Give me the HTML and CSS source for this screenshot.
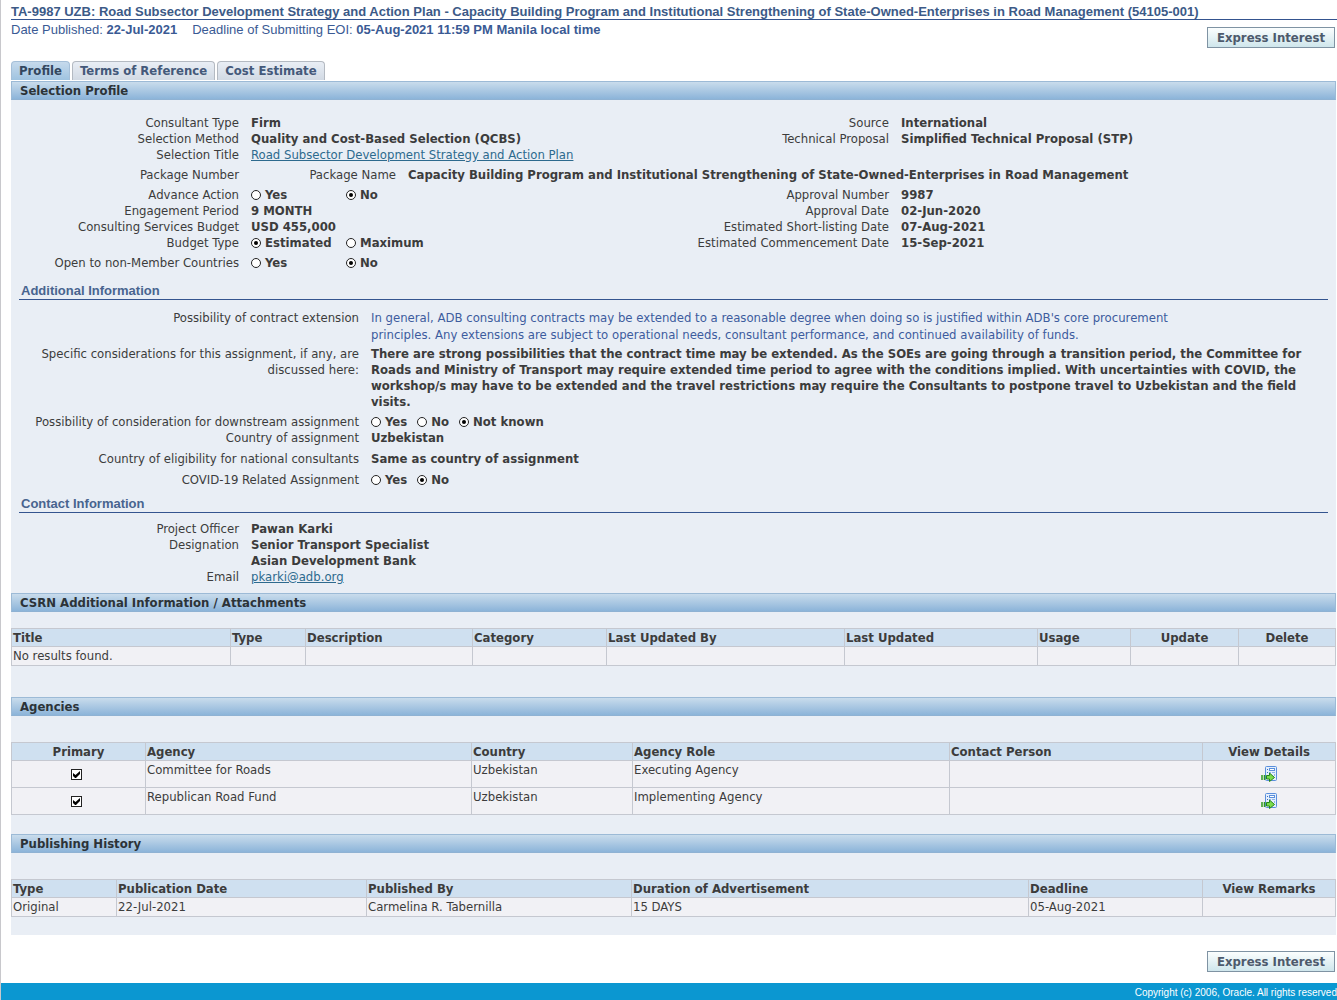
FILE: index.html
```html
<!DOCTYPE html>
<html lang="en">
<head>
    <meta charset="UTF-8">
    <meta name="viewport" content="width=device-width, initial-scale=1.0">
    <title>Selection Profile</title>
    <link rel="stylesheet" href="styles.css">
</head>
<body>
    <svg class="sprite" aria-hidden="true">
        <symbol id="details" viewBox="0 0 16 16">
            <rect x="4.5" y=".5" width="11" height="14" rx="1" fill="#e4effc" stroke="#5b8fdc"/>
            <path d="M6 3.5h1M6 6.5h1" stroke="#3c6cc0"/>
            <rect x="8.5" y="2.5" width="5" height="2" fill="#fff" stroke="#5b8fdc"/>
            <path d="M8 6.5h2M11 6.5h3M13.5 8v2" stroke="#8fb4ea"/>
            <path d="M1 9v5M3.5 9v5" stroke="#2f9a1c" stroke-width="1.5"/>
            <path d="M5.5 9.5h3V7l5 4.5-5 4v-2.500h-3z" fill="#7ddc4c" stroke="#24851a"/>
        </symbol>
    </svg>

    <div class="page">
        <h1>TA-9987 UZB: Road Subsector Development Strategy and Action Plan - Capacity Building Program and Institutional Strengthening of State-Owned-Enterprises in Road Management (54105-001)</h1>
        <div class="subhead">
            <div class="dates">
                <span>Date Published: <b>22-Jul-2021</b></span>
                <span>Deadline of Submitting EOI: <b>05-Aug-2021 11:59 PM Manila local time</b></span>
            </div>
            <button class="btn" type="button">Express Interest</button>
        </div>

        <nav class="tabs">
            <a class="tab active" href="#profile">Profile</a>
            <a class="tab" href="#terms">Terms of Reference</a>
            <a class="tab" href="#cost">Cost Estimate</a>
        </nav>

        <main class="panel" id="profile">
            <h2 class="bar">Selection Profile</h2>
            <div class="form profile">
                <div class="row">
                    <span class="label">Consultant Type</span><b>Firm</b>
                    <span class="label">Source</span><b>International</b>
                </div>
                <div class="row">
                    <span class="label">Selection Method</span><b>Quality and Cost-Based Selection (QCBS)</b>
                    <span class="label">Technical Proposal</span><b>Simplified Technical Proposal (STP)</b>
                </div>
                <div class="row">
                    <span class="label">Selection Title</span>
                    <a href="#title">Road Subsector Development Strategy and Action Plan</a>
                </div>
                <div class="row package">
                    <span class="label">Package Number</span>
                    <span class="label">Package Name</span>
                    <b>Capacity Building Program and Institutional Strengthening of State-Owned-Enterprises in Road Management</b>
                </div>
                <div class="row">
                    <span class="label" id="advance">Advance Action</span>
                    <div class="options wide" role="radiogroup" aria-labelledby="advance">
                        <label><input type="radio" name="advance">Yes</label>
                        <label><input type="radio" name="advance" checked>No</label>
                    </div>
                    <span class="label">Approval Number</span><b>9987</b>
                </div>
                <div class="row">
                    <span class="label">Engagement Period</span><b>9 MONTH</b>
                    <span class="label">Approval Date</span><b>02-Jun-2020</b>
                </div>
                <div class="row">
                    <span class="label">Consulting Services Budget</span><b>USD 455,000</b>
                    <span class="label">Estimated Short-listing Date</span><b>07-Aug-2021</b>
                </div>
                <div class="row">
                    <span class="label" id="budget">Budget Type</span>
                    <div class="options wide" role="radiogroup" aria-labelledby="budget">
                        <label><input type="radio" name="budget" checked>Estimated</label>
                        <label><input type="radio" name="budget">Maximum</label>
                    </div>
                    <span class="label">Estimated Commencement Date</span><b>15-Sep-2021</b>
                </div>
                <div class="row open">
                    <span class="label" id="open">Open to non-Member Countries</span>
                    <div class="options wide" role="radiogroup" aria-labelledby="open">
                        <label><input type="radio" name="open">Yes</label>
                        <label><input type="radio" name="open" checked>No</label>
                    </div>
                </div>
            </div>

            <h3>Additional Information</h3>
            <div class="form additional">
                <div class="row note">
                    <span class="label">Possibility of contract extension</span>
                    <p>In general, ADB consulting contracts may be extended to a reasonable degree when doing so is justified within ADB's core procurement<br>principles. Any extensions are subject to operational needs, consultant performance, and continued availability of funds.</p>
                </div>
                <div class="row">
                    <span class="label">Specific considerations for this assignment, if any, are discussed here:</span>
                    <b>There are strong possibilities that the contract time may be extended. As the SOEs are going through a transition period, the Committee for<br>Roads and Ministry of Transport may require extended time period to agree with the conditions implied. With uncertainties with COVID, the<br>workshop/s may have to be extended and the travel restrictions may require the Consultants to postpone travel to Uzbekistan and the field<br>visits.</b>
                </div>
                <div class="row downstream">
                    <span class="label" id="downstream">Possibility of consideration for downstream assignment</span>
                    <div class="options" role="radiogroup" aria-labelledby="downstream">
                        <label><input type="radio" name="downstream">Yes</label>
                        <label><input type="radio" name="downstream">No</label>
                        <label><input type="radio" name="downstream" checked>Not known</label>
                    </div>
                </div>
                <div class="row">
                    <span class="label">Country of assignment</span><b>Uzbekistan</b>
                </div>
                <div class="row eligibility">
                    <span class="label">Country of eligibility for national consultants</span><b>Same as country of assignment</b>
                </div>
                <div class="row">
                    <span class="label" id="covid">COVID-19 Related Assignment</span>
                    <div class="options" role="radiogroup" aria-labelledby="covid">
                        <label><input type="radio" name="covid">Yes</label>
                        <label><input type="radio" name="covid" checked>No</label>
                    </div>
                </div>
            </div>

            <h3>Contact Information</h3>
            <div class="form contact">
                <div class="row">
                    <span class="label">Project Officer</span><b>Pawan Karki</b>
                </div>
                <div class="row">
                    <span class="label">Designation</span><b>Senior Transport Specialist<br>Asian Development Bank</b>
                </div>
                <div class="row">
                    <span class="label">Email</span><a href="mailto:pkarki@adb.org">pkarki@adb.org</a>
                </div>
            </div>

            <h2 class="bar">CSRN Additional Information / Attachments</h2>
            <table class="attachments">
                <colgroup>
                    <col class="title"><col class="type"><col class="description"><col class="category"><col>
                    <col class="updated"><col class="usage"><col class="update"><col class="delete">
                </colgroup>
                <thead>
                    <tr><th>Title</th><th>Type</th><th>Description</th><th>Category</th><th>Last Updated By</th><th>Last Updated</th><th>Usage</th><th class="center">Update</th><th class="center">Delete</th></tr>
                </thead>
                <tbody>
                    <tr><td>No results found.</td><td></td><td></td><td></td><td></td><td></td><td></td><td></td><td></td></tr>
                </tbody>
            </table>

            <h2 class="bar">Agencies</h2>
            <table class="agencies">
                <colgroup>
                    <col class="primary"><col class="agency"><col class="country"><col><col class="person"><col class="view">
                </colgroup>
                <thead>
                    <tr><th class="center">Primary</th><th>Agency</th><th>Country</th><th>Agency Role</th><th>Contact Person</th><th class="center">View Details</th></tr>
                </thead>
                <tbody>
                    <tr>
                        <td class="center"><input type="checkbox" aria-label="Committee for Roads is primary" checked></td>
                        <td>Committee for Roads</td><td>Uzbekistan</td><td>Executing Agency</td><td></td>
                        <td class="center"><a href="#agency-1" aria-label="View details of Committee for Roads"><svg class="icon"><use href="#details"/></svg></a></td>
                    </tr>
                    <tr>
                        <td class="center"><input type="checkbox" aria-label="Republican Road Fund is primary" checked></td>
                        <td>Republican Road Fund</td><td>Uzbekistan</td><td>Implementing Agency</td><td></td>
                        <td class="center"><a href="#agency-2" aria-label="View details of Republican Road Fund"><svg class="icon"><use href="#details"/></svg></a></td>
                    </tr>
                </tbody>
            </table>

            <h2 class="bar">Publishing History</h2>
            <table class="history">
                <colgroup>
                    <col class="kind"><col class="date"><col class="by"><col><col class="deadline"><col class="view">
                </colgroup>
                <thead>
                    <tr><th>Type</th><th>Publication Date</th><th>Published By</th><th>Duration of Advertisement</th><th>Deadline</th><th class="center">View Remarks</th></tr>
                </thead>
                <tbody>
                    <tr><td>Original</td><td>22-Jul-2021</td><td>Carmelina R. Tabernilla</td><td>15 DAYS</td><td>05-Aug-2021</td><td></td></tr>
                </tbody>
            </table>
        </main>

        <div class="actions">
            <button class="btn" type="button">Express Interest</button>
        </div>
    </div>
    <footer>Copyright (c) 2006, Oracle. All rights reserved</footer>
</body>
</html>
```

FILE: styles.css
```css
* {
    box-sizing: border-box;
}
body {
    margin: 0;
    border-left: 1px solid #c8c8cc;
    font-family: "DejaVu Sans Condensed", Tahoma, sans-serif;
    font-size: 13px;
    line-height: 16px;
    color: #3c3c3c;
    background-color: #fff;
}
h1, h2, h3, p {
    margin: 0;
}
a {
    color: #2d6a8e;
}
.sprite {
    display: none;
}
.page {
    padding: 4px 0 0 10px;
}
h1 {
    border-bottom: 1px solid #34548f;
    font: bold 13px/15px "Liberation Sans", Arial, sans-serif;
    color: #3c5a87;
    white-space: nowrap;
}
.subhead {
    display: flex;
    justify-content: space-between;
    padding: 1px 2px 0 0;
    font: 13px/18px "Liberation Sans", Arial, sans-serif;
    color: #3a5a94;
}
.dates {
    display: flex;
    gap: 15px;
}
.btn {
    width: 128px;
    height: 21px;
    padding: 0;
    border: 1px solid #7f93a3;
    background: linear-gradient(#fbfefe, #cfe6ec);
    font: bold 13px/16px "DejaVu Sans Condensed", Tahoma, sans-serif;
    color: #4d5a6c;
    cursor: pointer;
}
.subhead .btn {
    margin-top: 6px;
}
.tabs {
    display: flex;
    gap: 2px;
    margin-top: 13px;
}
.tab {
    height: 19px;
    padding: 1px 7px;
    border: 1px solid #b4bac2;
    border-bottom: 0;
    border-radius: 4px 4px 0 0;
    background: linear-gradient(#e9eef5, #d2dae4);
    font-weight: bold;
    color: #44597a;
    text-decoration: none;
}
.tab.active {
    border-color: #a5bfd8;
    background: linear-gradient(#c6daec, #9fc3e0);
    color: #33475e;
}
.panel {
    margin: 1px 1px 0 0;
    padding-bottom: 18px;
    background-color: #e9eef5;
}
.bar {
    height: 19px;
    padding: 1px 8px;
    border: 1px solid #9cbad6;
    border-bottom-color: #8fb2d3;
    background: linear-gradient(#c9dcec, #8cb4d9);
    font-size: 13px;
    color: #2c3338;
}
h3 {
    margin: 0 8px;
    padding: 8px 2px 0;
    height: 25px;
    border-bottom: 1px solid #34548f;
    font: bold 13px/16px "Liberation Sans", Arial, sans-serif;
    color: #48648f;
}

.row {
    display: grid;
    grid-template-columns: 228px 1fr 250px 435px;
    column-gap: 12px;
}
.label {
    text-align: right;
}
.form.profile {
    padding-top: 15px;
}
.package {
    grid-template-columns: 228px 145px 1fr;
    padding: 4px 0;
}
.open {
    padding: 4px 0;
}
.additional {
    padding: 9px 0 0;
}
.additional .row {
    grid-template-columns: 348px 1fr;
}
.note {
    margin-bottom: 3px;
    line-height: 17px;
    color: #3d5c9e;
}
.note .label {
    color: #3c3c3c;
}
.downstream {
    margin-top: 4px;
}
.eligibility {
    padding: 5px 0;
}
.contact {
    padding: 8px 0;
}
.options {
    display: flex;
    gap: 10px;
    font-weight: bold;
}
.options label {
    display: flex;
    align-items: center;
    gap: 4px;
}
.wide {
    display: grid;
    grid-template-columns: 95px 1fr;
    gap: 0;
}

input {
    appearance: none;
    display: grid;
    place-items: center;
    margin: 0;
    border: 1px solid #222;
    background-color: #fff;
}
input[type="radio"] {
    width: 10px;
    height: 10px;
    border-radius: 50%;
}
input[type="radio"]:checked::before {
    content: "";
    width: 4px;
    height: 4px;
    border-radius: 50%;
    background-color: #000;
}
input[type="checkbox"] {
    width: 11px;
    height: 11px;
    margin: 7px auto 0 58px;
}
input[type="checkbox"]:checked::before {
    content: "";
    width: 7px;
    height: 7px;
    background-color: #000;
    clip-path: polygon(0 29%, 0 71%, 29% 100%, 43% 100%, 100% 43%, 100% 0, 36% 57%);
}

table {
    width: 100%;
    border-collapse: collapse;
    table-layout: fixed;
}
th, td {
    height: 18px;
    padding: 1px 1px 0;
    border: 1px solid #c5c8d0;
    text-align: left;
    vertical-align: top;
}
th {
    background-color: #cfe0f0;
}
td {
    height: 19px;
    background-color: #f1f1f5;
}
th.center, td.center {
    text-align: center;
}
.attachments {
    margin: 16px 0 31px;
}
.agencies {
    margin: 26px 0 19px;
}
.agencies td {
    height: 27px;
}
.history {
    margin-top: 26px;
}
.icon {
    display: block;
    width: 16px;
    height: 16px;
    margin: 4px auto 0;
}
.title { width: 219px; }
.type { width: 75px; }
.description { width: 167px; }
.category { width: 134px; }
.updated { width: 193px; }
.usage { width: 93px; }
.update { width: 108px; }
.delete { width: 97px; }
.primary { width: 134px; }
.agency { width: 326px; }
.country { width: 161px; }
.person { width: 253px; }
.view { width: 133px; }
.kind { width: 105px; }
.date { width: 250px; }
.by { width: 265px; }
.deadline { width: 174px; }

.actions {
    display: flex;
    justify-content: flex-end;
    padding: 16px 2px 11px 0;
}
footer {
    height: 17px;
    overflow: hidden;
    background-color: #0b97d1;
    font: 10px/19px "Liberation Sans", Arial, sans-serif;
    color: #fff;
    text-align: right;
}
```
